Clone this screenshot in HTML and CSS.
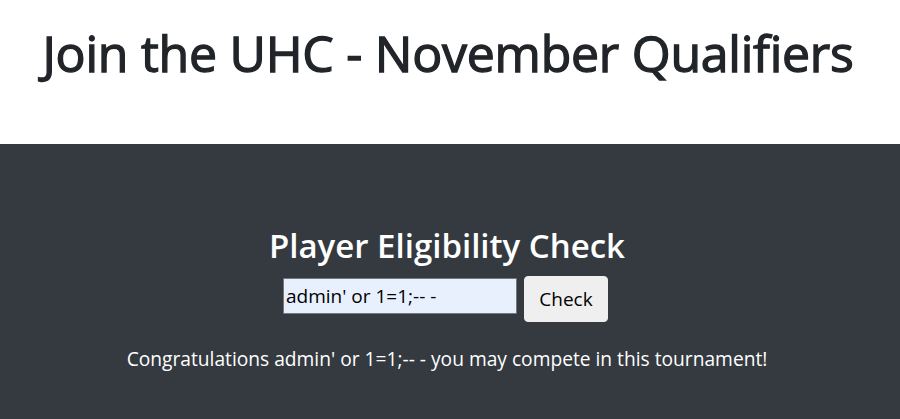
FILE: index.html
```html
<!DOCTYPE html>
<html>
<head>
<meta charset="utf-8">
<link rel="stylesheet" href="styles.css">
</head>
<body>
<header class="top">
  <h1 class="title">Join the UHC - November Qualifiers</h1>
</header>
<section class="panel">
  <h2 class="subtitle">Player Eligibility Check</h2>
  <form class="check-form">
    <input class="name-input" type="text" value="admin' or 1=1;-- -">
    <button class="check-btn" type="button">Check</button>
  </form>
  <p class="result">Congratulations admin' or 1=1;-- - you may compete in this tournament!</p>
</section>
</body>
</html>
```
FILE: styles.css
```css
html, body {
  margin: 0;
  padding: 0;
  height: 100%;
}
body {
  font-family: "Open Sans", "Noto Sans", sans-serif;
  color: #212529;
  background: #343a40;
}
.top {
  background: #fff;
  height: 144px;
  display: flex;
  justify-content: center;
  align-items: flex-start;
}
.title {
  margin: 23px 0 0;
  font-size: 50px;
  font-weight: 400;
  line-height: 1.2;
  letter-spacing: -0.25px;
  -webkit-text-stroke: 1.3px #212529;
  position: relative;
  left: -2px;
}
.panel {
  background: #343a40;
  color: #fff;
  text-align: center;
  padding-top: 82px;
}
.subtitle {
  margin: 0 0 10px;
  font-size: 33px;
  font-weight: 600;
  line-height: 1.2;
  position: relative;
  left: -3px;
}
.check-form {
  display: flex;
  justify-content: center;
  align-items: center;
  gap: 7px;
  padding-right: 9px;
}
.name-input {
  width: 234px;
  height: 36px;
  box-sizing: border-box;
  background: #e8f0fe;
  border: 1px solid #767676;
  font-family: "Open Sans", sans-serif;
  font-size: 19px;
  padding: 0 2px;
  color: #000;
  position: relative;
  top: -3px;
}
.check-btn {
  width: 84px;
  height: 46px;
  background: #efefef;
  border: 1px solid #efefef;
  border-radius: 4px;
  font-family: "Open Sans", sans-serif;
  font-size: 19px;
  color: #000;
  padding: 0;
}
.result {
  margin: 23px 0 0;
  font-size: 19.2px;
  line-height: 1.5;
  position: relative;
  left: -3px;
}
```
